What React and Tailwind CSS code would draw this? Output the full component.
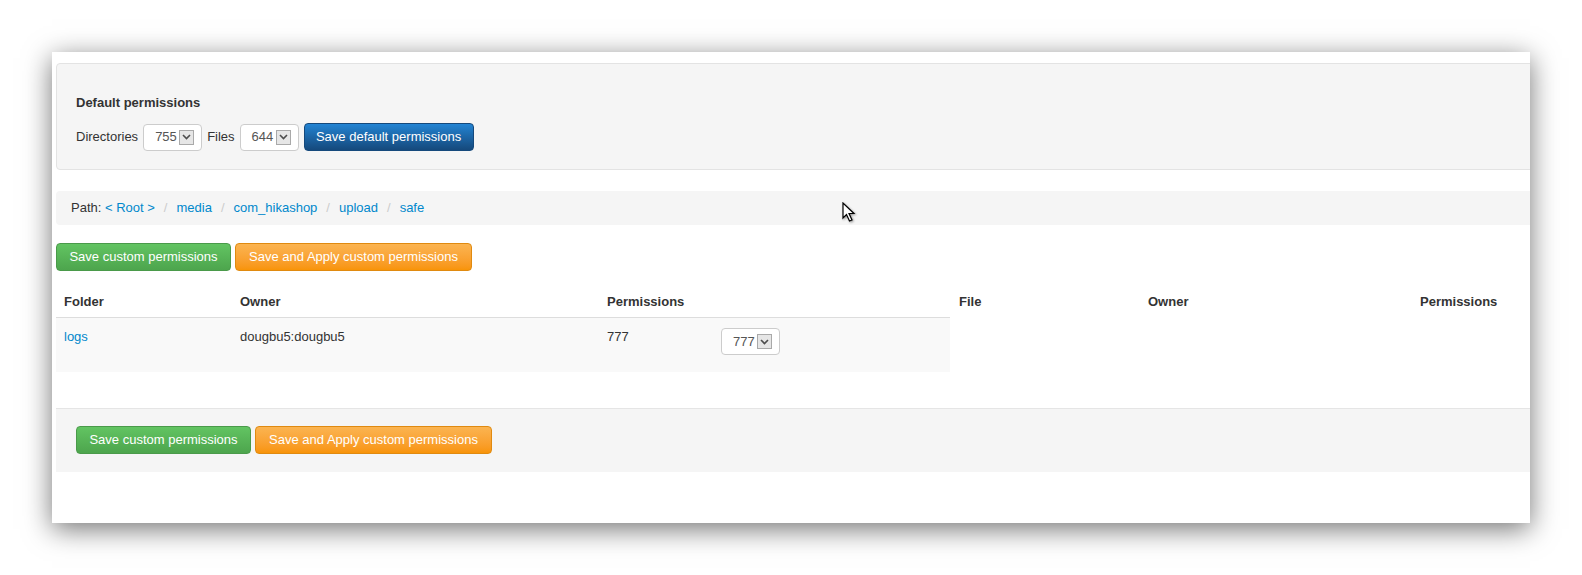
import React from "react";

const font = { fontFamily: '"Liberation Sans", Arial, sans-serif' };

const SelectBox = ({ value }) => (
  <div className="flex h-[27px] w-[59px] items-center justify-between rounded-[4px] border border-[#cccccc] bg-white pl-[11px] pr-[7px]">
    <span className="text-[13px] text-[#555555]">{value}</span>
    <span className="flex h-[15px] w-[15px] items-center justify-center border border-[#a9a9a9] bg-[#e6e6e6]">
      <svg width="9" height="6" viewBox="0 0 9 6">
        <path d="M1 1 L4.5 4.5 L8 1" fill="none" stroke="#4d4d4d" strokeWidth="1.6" />
      </svg>
    </span>
  </div>
);

const ActionButtons = () => (
  <div className="flex gap-[4px]">
    <button className="h-[28px] w-[175px] rounded-[4px] border border-[#4a9a4a] bg-gradient-to-b from-[#62c462] to-[#4da54d] text-[13px] text-white">
      Save custom permissions
    </button>
    <button className="h-[28px] w-[237px] rounded-[4px] border border-[#e08a10] bg-gradient-to-b from-[#fbb450] to-[#f89406] text-[13px] text-white">
      Save and Apply custom permissions
    </button>
  </div>
);

const Divider = () => <span className="mx-[9px] text-[#cccccc]">/</span>;

export default function App() {
  return (
    <div className="relative h-[575px] w-[1582px] overflow-hidden bg-white pl-[52px] pt-[52px]" style={font}>
      {/* Window */}
      <div className="h-[471px] w-[1478px] overflow-hidden bg-white pl-[4px] pt-[11px] shadow-[0_6px_26px_rgba(0,0,0,0.55)]">
        <div className="w-[1520px] text-[13px] text-[#333333]">
          {/* Default permissions */}
          <div className="h-[107px] rounded-[4px] border border-[#e3e3e3] bg-[#f5f5f5] pl-[19px] pt-[30px]">
            <div className="h-[18px] text-[13px] font-bold leading-[18px]">Default permissions</div>
            <div className="mt-[11px] flex h-[28px] items-center gap-[5px]">
              <span>Directories</span>
              <SelectBox value="755" />
              <span>Files</span>
              <SelectBox value="644" />
              <button className="h-[28px] w-[170px] rounded-[4px] border border-[#15497c] bg-gradient-to-b from-[#2384d3] to-[#15497c] text-[13px] text-white">
                Save default permissions
              </button>
            </div>
          </div>

          {/* Path */}
          <div className="mt-[21px] flex h-[34px] items-center rounded-[4px] bg-[#f5f5f5] pl-[15px]">
            <span>Path:&nbsp;</span>
            <span className="text-[#0088cc]">&lt; Root &gt;</span>
            <Divider />
            <span className="text-[#0088cc]">media</span>
            <Divider />
            <span className="text-[#0088cc]">com_hikashop</span>
            <Divider />
            <span className="text-[#0088cc]">upload</span>
            <Divider />
            <span className="text-[#0088cc]">safe</span>
          </div>

          <div className="mt-[18px]">
            <ActionButtons />
          </div>

          {/* Tables */}
          <div className="mt-[12px] flex">
            <div className="w-[894px]">
              <div className="flex h-[35px] items-center border-b border-[#dddddd] pt-[3px] font-bold">
                <div className="w-[176px] pl-[8px]">Folder</div>
                <div className="w-[367px] pl-[8px]">Owner</div>
                <div className="pl-[8px]">Permissions</div>
              </div>
              <div className="flex h-[54px] items-start bg-[#f9f9f9] pt-[10px] leading-[18px]">
                <div className="w-[176px] pl-[8px] text-[#0088cc]">logs</div>
                <div className="w-[367px] pl-[8px]">dougbu5:dougbu5</div>
                <div className="w-[114px] pl-[8px]">777</div>
                <div className="pl-[8px]">
                  <SelectBox value="777" />
                </div>
              </div>
            </div>
            <div className="flex-1">
              <div className="flex h-[35px] items-center pt-[3px] font-bold">
                <div className="w-[190px] pl-[9px]">File</div>
                <div className="w-[272px] pl-[8px]">Owner</div>
                <div className="pl-[8px]">Permissions</div>
              </div>
            </div>
          </div>

          {/* Bottom toolbar */}
          <div className="mt-[36px] h-[64px] border-t border-[#e5e5e5] bg-[#f5f5f5] pl-[20px] pt-[17px]">
            <ActionButtons />
          </div>
        </div>
      </div>

      {/* Mouse cursor */}
      <svg
        className="absolute left-[842px] top-[202px]"
        width="14"
        height="22"
        viewBox="0 0 14 22"
        style={{ filter: "drop-shadow(1px 1px 1px rgba(0,0,0,0.4))" }}
      >
        <path d="M1 1 L1 16 L4.5 12.5 L7.5 19 L10 18 L7 11.5 L12 11.5 Z" fill="white" stroke="black" strokeWidth="1.2" strokeLinejoin="miter" />
      </svg>
    </div>
  );
}
